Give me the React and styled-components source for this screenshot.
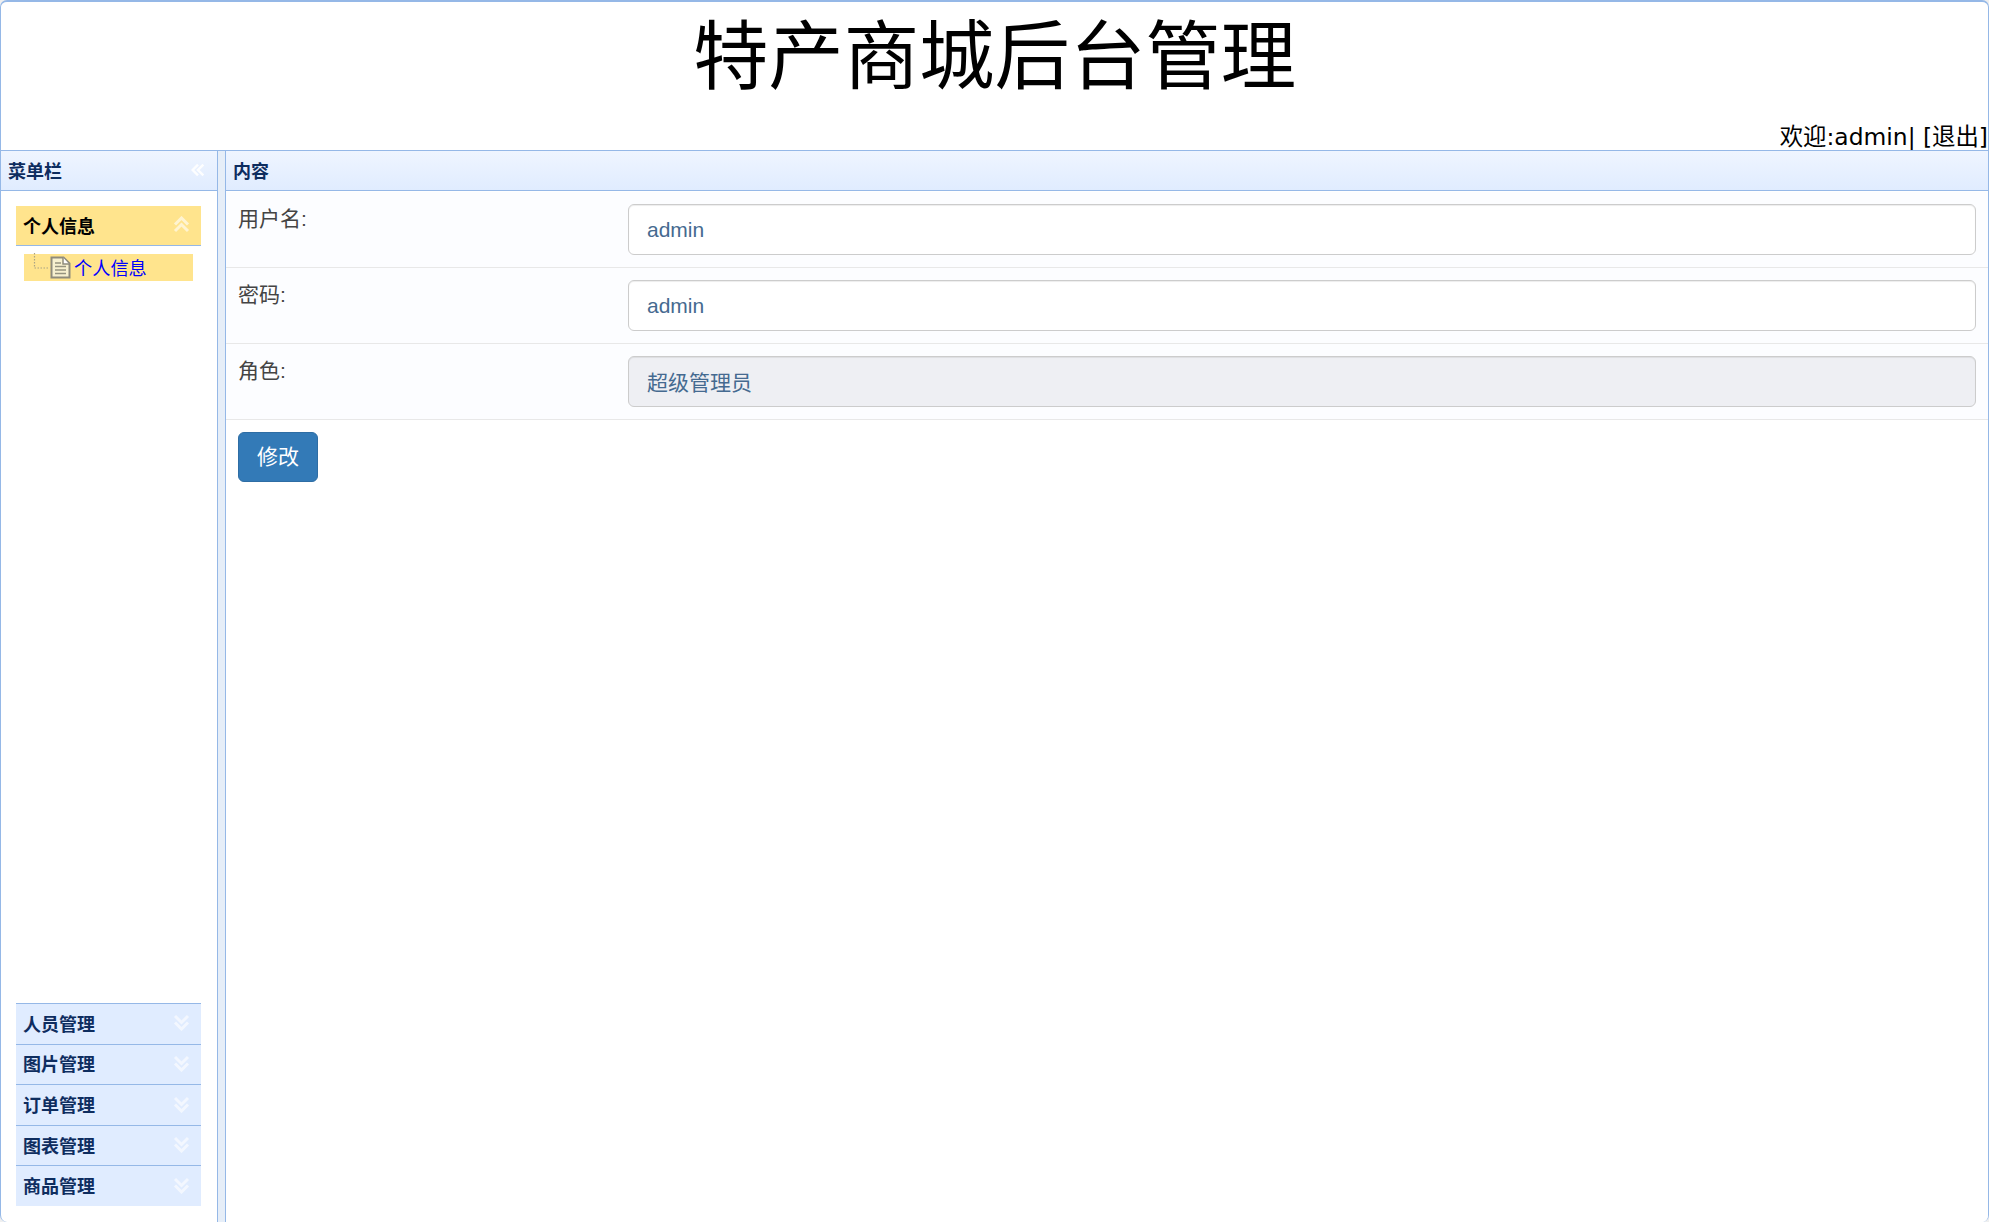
import styled, { createGlobalStyle } from "styled-components"

const cjk = `"Noto Sans CJK SC", sans-serif`

const GlobalStyle = createGlobalStyle`
html, body {
    margin: 0;
    padding: 0;
    background: #efefef;
}
* {
    box-sizing: border-box;
}
`
const Page = styled.div`
width: 1989px;
height: 1222px;
overflow: hidden;
display: flex;
flex-direction: column;
border-top: 2px solid #95b8e7;
border-left: 1px solid #95b8e7;
border-right: 1px solid #95b8e7;
border-radius: 7px;
background: #fff;
`
const North = styled.div`
height: 148px;
display: flex;
flex-direction: column;
justify-content: space-between;
`
const Title = styled.h1`
margin: 0;
padding-top: 8px;
text-align: center;
font-family: "Liberation Sans", ${cjk};
font-size: 75.4px;
font-weight: 400;
line-height: 95px;
color: #000;
`
const Welcome = styled.div`
text-align: right;
font-family: "DejaVu Sans", ${cjk};
font-size: 23.4px;
line-height: 28px;
margin-bottom: -1px;
white-space: pre;
color: #000;
`
const Layout = styled.div`
flex: 1;
display: flex;
min-height: 0;
`
const Panel = styled.div`
display: flex;
flex-direction: column;
min-height: 0;
${p => p.$side ? "width: 217px; border-right: 1px solid #95b8e7;" : "flex: 1; border-left: 1px solid #95b8e7;"}
`
const PanelHeader = styled.div`
height: 41px;
flex-shrink: 0;
display: flex;
align-items: center;
justify-content: space-between;
padding: 0 12px 2px 7px;
background: linear-gradient(to bottom, #eff5ff 0, #e0ecff 100%);
border-top: 1px solid #95b8e7;
border-bottom: 1px solid #95b8e7;
`
const PanelTitle = styled.span`
font-family: "Liberation Sans", ${cjk};
font-size: 18px;
font-weight: 700;
color: #0e2d5f;
`
const Splitter = styled.div`
width: 7px;
background: #e6eef8;
border-top: 1px solid #95b8e7;
`
const SideBody = styled.div`
flex: 1;
min-height: 0;
display: flex;
flex-direction: column;
padding: 15px 16px 16px 15px;
`
const AccordionHeader = styled.div`
height: ${p => p.$active ? "40px" : "40.6px"};
flex-shrink: 0;
display: flex;
align-items: center;
justify-content: space-between;
padding: 0 11px 2px 7px;
background: ${p => p.$active ? "#ffe48d" : "#e0ecff"};
border-${p => p.$active ? "bottom" : "top"}: 1px solid #95b8e7;
font-family: "Liberation Sans", ${cjk};
font-size: 18px;
font-weight: 700;
color: ${p => p.$active ? "#000" : "#0e2d5f"};
`
const AccordionBody = styled.div`
flex: 1;
padding: 8px 8px 0;
`
const TreeNode = styled.div`
height: 27px;
display: flex;
align-items: center;
background: #ffe48d;
padding: 0 0 2px 9px;
font-family: "Liberation Sans", ${cjk};
font-size: 18.2px;
color: #0000ff;
`
const Content = styled.div`
flex: 1;
min-height: 0;
background: #fff;
padding-top: 1px;
`
const Row = styled.div`
height: 76px;
display: flex;
background: #fcfdff;
border-bottom: 1px solid #e8e8e8;
padding: 12px 12px 0 12px;
`
const Label = styled.label`
width: 390px;
flex-shrink: 0;
font-family: "Liberation Sans", ${cjk};
font-size: 21px;
line-height: 30px;
color: #444;
`
const Input = styled.input`
flex: 1;
min-width: 0;
height: 51px;
padding: 0 18px ${p => p.disabled ? "2px" : "0"};
border: 1px solid #ccc;
border-radius: 6px;
box-shadow: inset 0 1px 1px rgba(0, 0, 0, .075);
background: ${p => p.disabled ? "#eeeff3" : "#fff"};
font-family: "Liberation Sans", ${cjk};
font-size: 21px;
color: #456a90;
outline: none;
opacity: 1;
-webkit-text-fill-color: #456a90;
`
const Button = styled.button`
display: block;
width: 80px;
height: 50px;
margin: 12px 0 0 12px;
padding: 0 0 4px;
background: #337ab7;
border: 1px solid #2e6da4;
border-radius: 6px;
font-family: "Liberation Sans", ${cjk};
font-size: 21px;
color: #fff;
`

function DoubleChevron({ dir }) {
    const rotate = { up: 0, down: 180, left: -90 }[dir]
    const size = dir === "left" ? 14 : 17
    return (
        <svg width={size} height={size} viewBox="0 0 17 17" fill="none" stroke="#fff" strokeOpacity={dir === "left" ? 0.9 : 0.6} strokeWidth="3" style={{ transform: `rotate(${rotate}deg)`, flexShrink: 0 }}>
            <path d="M2 8.5 8.5 2 15 8.5" />
            <path d="M2 15 8.5 8.5 15 15" />
        </svg>
    )
}

function FileIcon() {
    return (
        <svg width="41" height="27" viewBox="0 0 41 27" fill="none" style={{ flexShrink: 0 }}>
            <path d="M1.5 0V15H16" stroke="#a9a286" strokeWidth="1.2" strokeDasharray="1.5 1.5" />
            <path d="M18.5 4.5H30.5L36.5 10.5V24.5H18.5Z" fill="#f7f0cf" stroke="#8f8b7c" strokeWidth="2" />
            <path d="M30 4.5V11H36" fill="#fff" stroke="#8f8b7c" strokeWidth="1.5" />
            <path d="M22 10H28M22 13.5H33M22 17H33M22 20.5H33" stroke="#96937f" strokeWidth="1.5" />
        </svg>
    )
}

const menus = ["人员管理", "图片管理", "订单管理", "图表管理", "商品管理"]

function App() {
    return (
        <>
            <GlobalStyle />
            <Page>
                <North>
                    <Title>特产商城后台管理</Title>
                    <Welcome>欢迎:admin| [退出]</Welcome>
                </North>
                <Layout>
                    <Panel $side>
                        <PanelHeader>
                            <PanelTitle>菜单栏</PanelTitle>
                            <DoubleChevron dir="left" />
                        </PanelHeader>
                        <SideBody>
                            <AccordionHeader $active>
                                个人信息
                                <DoubleChevron dir="up" />
                            </AccordionHeader>
                            <AccordionBody>
                                <TreeNode>
                                    <FileIcon />
                                    <span>个人信息</span>
                                </TreeNode>
                            </AccordionBody>
                            {menus.map(m => (
                                <AccordionHeader key={m}>
                                    {m}
                                    <DoubleChevron dir="down" />
                                </AccordionHeader>
                            ))}
                        </SideBody>
                    </Panel>
                    <Splitter />
                    <Panel>
                        <PanelHeader>
                            <PanelTitle>内容</PanelTitle>
                        </PanelHeader>
                        <Content>
                            <Row>
                                <Label>用户名:</Label>
                                <Input defaultValue="admin" />
                            </Row>
                            <Row>
                                <Label>密码:</Label>
                                <Input defaultValue="admin" />
                            </Row>
                            <Row>
                                <Label>角色:</Label>
                                <Input defaultValue="超级管理员" disabled />
                            </Row>
                            <Button>修改</Button>
                        </Content>
                    </Panel>
                </Layout>
            </Page>
        </>
    )
}

export default App
